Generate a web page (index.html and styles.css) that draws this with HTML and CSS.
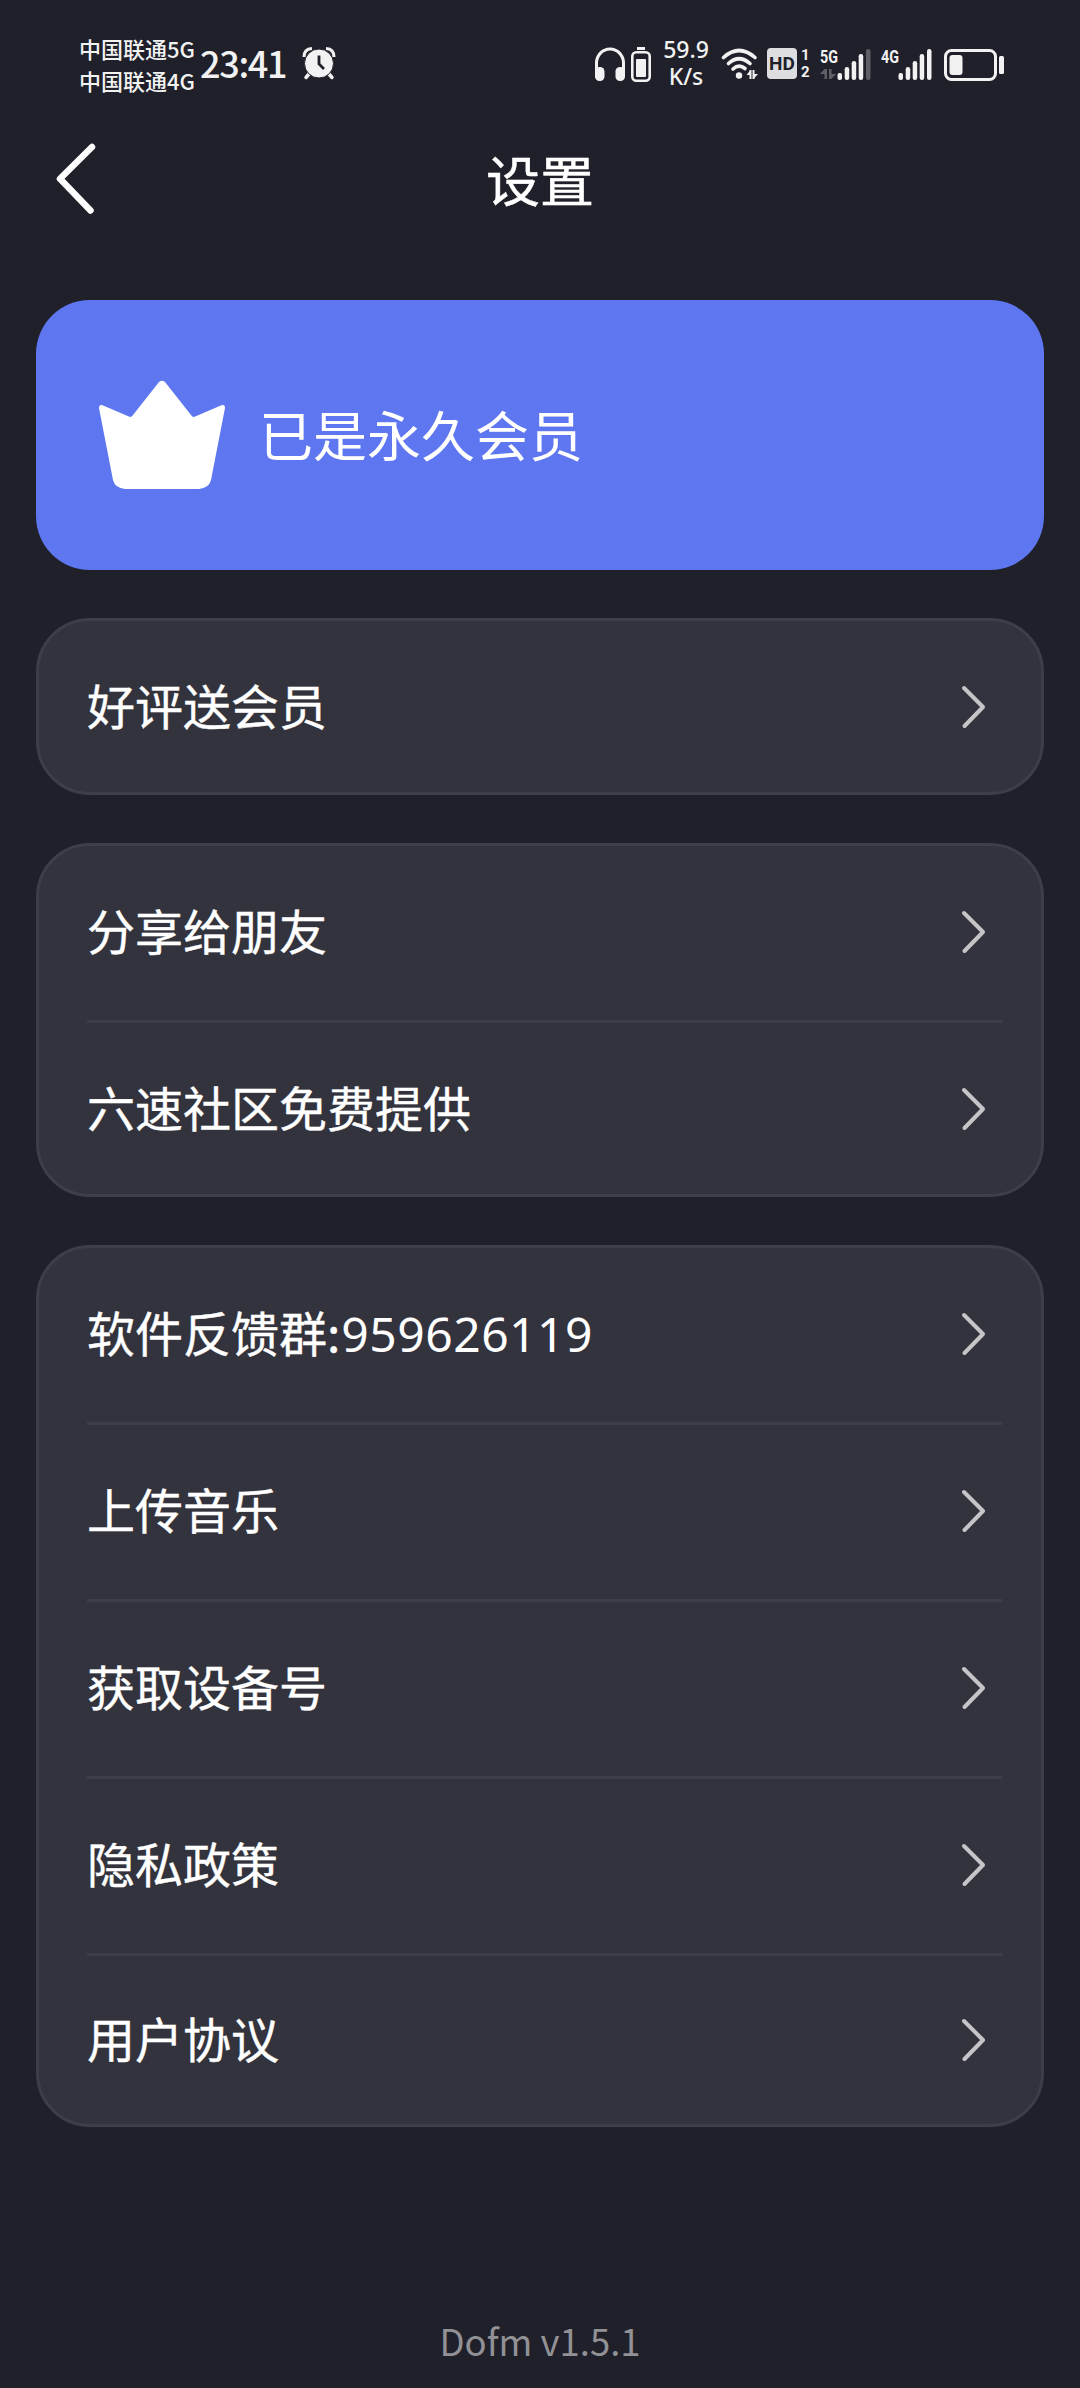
FILE: index.html
```html
<!DOCTYPE html>
<html lang="zh-CN">
<head>
<meta charset="utf-8">
<title>设置</title>
<link rel="stylesheet" href="styles.css">
</head>
<body>
<svg class="defs" width="0" height="0" aria-hidden="true">
  <symbol id="chev" viewBox="0 0 28 46"><path d="M4 4 L23 23 L4.500 42" fill="none" stroke="#c5c5c8" stroke-width="4" stroke-linecap="round" stroke-linejoin="round"/></symbol>
</svg>
<header class="status">
  <div class="carriers"><span>中国联通5G</span><span>中国联通4G</span></div>
  <div class="clock">23:41</div>
  <svg class="alarm" width="34" height="34" viewBox="0 0 34 34">
    <path d="M2 10 Q2 2 10 1.500 M24 1.500 Q32 2 32 10" fill="none" stroke="#f2f2f2" stroke-width="3"/>
    <path d="M7 27 L4 30.500M27 27 L30 30.500" fill="none" stroke="#f2f2f2" stroke-width="3.500" stroke-linecap="round"/>
    <circle cx="17" cy="16.500" r="14.500" fill="#f2f2f2" stroke="#20202a" stroke-width="1"/>
    <path d="M17 8.500 V17 L22 22" fill="none" stroke="#20202a" stroke-width="2.800"/>
  </svg>
  <svg class="headset" width="32" height="36" viewBox="0 0 32 36">
    <path d="M2.500 26 V16 A13.500 14 0 0 1 29.500 16 V26" fill="none" stroke="#f2f2f2" stroke-width="3"/>
    <rect x="1" y="20" width="9.500" height="14" rx="4.500" fill="#f2f2f2"/><rect x="21.500" y="20" width="9.500" height="14" rx="4.500" fill="#f2f2f2"/>
  </svg>
  <svg class="headbat" width="20" height="36" viewBox="0 0 20 36">
    <rect x="6" y="0" width="8" height="3" fill="#f2f2f2"/><rect x="1.300" y="5.300" width="17.400" height="28.400" rx="4" fill="none" stroke="#f2f2f2" stroke-width="2.600"/><rect x="5" y="12" width="10" height="18" rx="1" fill="#f2f2f2"/>
  </svg>
  <div class="speed"><span>59.9</span><span>K/s</span></div>
  <svg class="wifi" width="38" height="34" viewBox="0 0 38 34">
    <g fill="none" stroke="#f2f2f2" stroke-width="3.600" stroke-linecap="round"><path d="M2.500 9.500 Q18 -4.500 34 9.500"/><path d="M7.500 15.500 Q18 6 29 15.500"/><path d="M12 21 Q18 15.500 24 20.500"/></g>
    <circle cx="18" cy="27.500" r="3.200" fill="#f2f2f2"/>
    <path d="M29.500 22 V31 M32.500 22 V31" stroke="#f2f2f2" stroke-width="2"/><path d="M29.500 22 L25.500 27 H29.500Z M32.500 31 L37 26 H32.500Z" fill="#f2f2f2"/>
  </svg>
  <div class="hd">HD</div>
  <div class="sims"><span>1</span><span>2</span></div>
  <svg class="sig5" width="52" height="34" viewBox="0 0 52 34">
    <text x="0" y="14.500" class="net" textLength="18" lengthAdjust="spacingAndGlyphs">5G</text>
    <g fill="#5f5f68"><path d="M4.500 21 V31 H7 V21Z M4.500 21 L0 26 H4.500Z M9 21 V31 H11.500 V21Z M11.500 31 L16 26 H11.500Z"/><rect x="46" y="1" width="4.500" height="31" rx="2.200"/></g>
    <g fill="#f2f2f2"><rect x="17.500" y="25" width="4.500" height="7" rx="2"/><rect x="24.700" y="19" width="4.500" height="13" rx="2.200"/><rect x="31.700" y="13" width="4.500" height="19" rx="2.200"/><rect x="38.700" y="6" width="4.500" height="26" rx="2.200"/></g>
  </svg>
  <svg class="sig4" width="52" height="34" viewBox="0 0 52 34">
    <text x="0" y="14.500" class="net" textLength="18" lengthAdjust="spacingAndGlyphs">4G</text>
    <g fill="#f2f2f2"><rect x="17.500" y="25" width="4.500" height="7" rx="2"/><rect x="24.700" y="19" width="4.500" height="13" rx="2.200"/><rect x="31.700" y="13" width="4.500" height="19" rx="2.200"/><rect x="38.700" y="6" width="4.500" height="26" rx="2.200"/><rect x="46" y="1" width="4.500" height="31" rx="2.200"/></g>
  </svg>
  <svg class="battery" width="60" height="32" viewBox="0 0 60 32">
    <rect x="1.500" y="1.500" width="50" height="29" rx="6" fill="none" stroke="#f2f2f2" stroke-width="3"/><rect x="5.500" y="6" width="13" height="20" rx="3" fill="#f2f2f2"/><rect x="55" y="7" width="5" height="18" rx="1.500" fill="#f2f2f2"/>
  </svg>
</header>
<nav class="topbar">
  <svg class="back" width="42" height="72" viewBox="0 0 42 72"><path d="M36 4 L4 35.700 L34.500 67.500" fill="none" stroke="#fff" stroke-width="6.500" stroke-linecap="round" stroke-linejoin="round"/></svg>
  <h1>设置</h1>
</nav>
<main>
  <section class="vip">
    <svg width="128" height="110" viewBox="0 0 128 110"><path d="M4 25 Q1 24.500 1 28 L15 100 Q17 108 27 109 H101 Q111 108 113 100 L127 28 Q127 24.500 124 25 L96 37 Q94 37 93 35 L67 2 Q64 -0.500 61 2 L35 35 Q34 37 32 37 Z" fill="#fff"/></svg>
    <span>已是永久会员</span>
  </section>
  <ul class="card">
    <li><span>好评送会员</span><svg class="chev"><use href="#chev"/></svg></li>
  </ul>
  <ul class="card">
    <li><span>分享给朋友</span><svg class="chev"><use href="#chev"/></svg></li>
    <li><span>六速社区免费提供</span><svg class="chev"><use href="#chev"/></svg></li>
  </ul>
  <ul class="card long">
    <li><span>软件反馈群:<b class="num">959626119</b></span><svg class="chev"><use href="#chev"/></svg></li>
    <li><span>上传音乐</span><svg class="chev"><use href="#chev"/></svg></li>
    <li><span>获取设备号</span><svg class="chev"><use href="#chev"/></svg></li>
    <li><span>隐私政策</span><svg class="chev"><use href="#chev"/></svg></li>
    <li><span>用户协议</span><svg class="chev"><use href="#chev"/></svg></li>
  </ul>
</main>
<footer>Dofm v1.5.1</footer>
</body>
</html>
```
FILE: styles.css
```css
* { box-sizing: border-box; margin: 0; padding: 0; }
body {
  width: 1080px;
  height: 2388px;
  overflow: hidden;
  display: flex;
  flex-direction: column;
  background: #20202a;
  color: #fff;
  font-family: "Noto Sans CJK SC", "Noto Sans", sans-serif;
}
svg { display: block; flex: none; overflow: visible; }
.defs { position: absolute; }

.status {
  height: 120px;
  padding: 10px 0 0 79px;
  display: flex;
  align-items: center;
  color: #f2f2f2;
  white-space: nowrap;
}
.status > * { flex: none; }
.carriers { width: 121px; margin-bottom: 2px; display: flex; flex-direction: column; font-size: 22px; line-height: 32px; font-weight: 500; }
.clock { width: 102px; margin-bottom: 6px; font-size: 36px; line-height: 44px; font-weight: 500; letter-spacing: -1.300px; }
.alarm { margin-bottom: 2px; }
.headset { margin-left: 258px; }
.headbat { margin-left: 5px; }
.speed { width: 70px; margin-bottom: 4px; display: flex; flex-direction: column; align-items: center; font: 500 23px/27px "Noto Sans", sans-serif; }
.wifi { margin-right: 8px; }
.hd { width: 30px; height: 31px; margin-bottom: 3px; border-radius: 4px; background: #dedee0; color: #20202a; font: 700 19px/31px "Roboto", sans-serif; text-align: center; }
.sims { display: flex; flex-direction: column; width: 23px; margin-bottom: 2px; padding-left: 4px; font: 700 15px/17px "Roboto", sans-serif; }
.net { font: 700 18px "Roboto", sans-serif; fill: #f2f2f2; }
.sig4 { margin-left: 9px; }
.battery { margin-left: 11px; }

.topbar { height: 180px; padding: 23px 0 0 56px; display: flex; }
.topbar h1 { flex: 1; padding-right: 98px; text-align: center; font-size: 54px; line-height: 72px; font-weight: 400; -webkit-text-stroke: 0.500px #fff; }

main { display: flex; flex-direction: column; gap: 48px; padding: 0 36px; }
.vip { height: 270px; border-radius: 54px; background: #5e77f0; display: flex; align-items: center; gap: 33px; padding-left: 62px; font-size: 54px; }
.vip span { padding-bottom: 3px; }
.card { list-style: none; border: 3px solid #3e3e48; border-radius: 54px; background: #33333d; padding: 0 39px 0 48px; }
.card li { height: 177px; display: flex; align-items: center; justify-content: space-between; padding: 0 14px 3px 0; font-size: 48px; border-bottom: 3px solid #3e3e48; }
.card li:last-child { height: 171px; padding-bottom: 0; border-bottom: 0; }
.card.long li:last-child { height: 168px; }
.card span { padding-bottom: 6px; -webkit-text-stroke: 0.400px #fff; }
.card .num { font-family: "Noto Sans", sans-serif; font-weight: 400; letter-spacing: 0.500px; margin-left: 1px; -webkit-text-stroke: 0; }
.chev { width: 28px; height: 46px; }

footer { margin-top: auto; height: 92px; text-align: center; font-size: 36.500px; line-height: 90px; color: #919196; }
```
